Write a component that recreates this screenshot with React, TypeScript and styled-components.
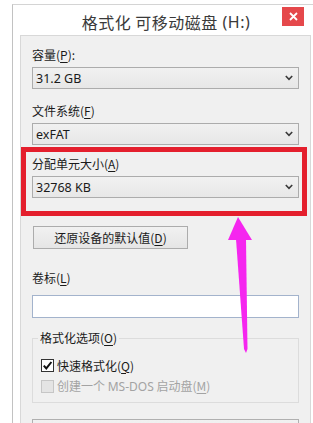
import React from "react";
import styled, { createGlobalStyle } from "styled-components";

const GlobalStyle = createGlobalStyle`
  html, body { margin: 0; padding: 0; background: #ffffff; overflow: hidden; }
  body {
    width: 313px; height: 423px;
    font-family: "Noto Sans", "Noto Sans CJK SC", sans-serif;
    -webkit-font-smoothing: antialiased;
  }
  * { box-sizing: border-box; }
`;

const Page = styled.div`
  position: relative;
  width: 313px;
  height: 423px;
  overflow: hidden;
  padding: 4px 0 0 12px;
`;

const Window = styled.div`
  width: 307px;
  height: 470px;
  border-left: 1px solid #c2c2c2;
  border-top: 1px solid #d4d4d4;
  background: #ffffff;
  display: flex;
  flex-direction: column;
`;

const TitleBar = styled.div`
  position: relative;
  flex: 0 0 30px;
  height: 30px;
  display: flex;
  align-items: center;
  justify-content: center;
  padding-top: 3px;
  font-family: "Noto Sans CJK SC", "Noto Sans", sans-serif;
  font-size: 16px;
  letter-spacing: 0.5px;
  color: #3a3a3a;
`;

const CloseButton = styled.div`
  position: absolute;
  top: 2px;
  right: 15px;
  width: 22px;
  height: 19px;
  background: #e5484b;
  display: flex;
  align-items: center;
  justify-content: center;
`;

const Content = styled.div`
  margin-left: 7px;
  width: 291px;
  flex: 1 0 auto;
  border: 1px solid #d8d8d8;
  background: #f0f0f0;
  padding: 11px 11px 0 11px;
  display: flex;
  flex-direction: column;
  align-items: flex-start;
`;

const Label = styled.div<{ $top?: number; $below?: number }>`
  margin-top: ${(p) => p.$top ?? 0}px;
  margin-bottom: ${(p) => p.$below ?? 4}px;
  font-size: 12px;
  line-height: 16px;
  color: #1a1a1a;
  font-family: "Noto Sans CJK SC", "Noto Sans", sans-serif;
  u { text-decoration-thickness: 1px; text-underline-offset: 2px; }
`;

const Latin = styled.span`
  font-family: "Noto Sans", "Noto Sans CJK SC", sans-serif;
`;

const Select = styled.div`
  flex: 0 0 22px;
  width: 267px;
  height: 22px;
  border: 1px solid #acacac;
  background: linear-gradient(#f1f1f1, #e7e7e7);
  display: flex;
  align-items: center;
  justify-content: space-between;
  padding: 0 5px 0 3px;
  font-family: "Noto Sans", sans-serif;
  font-size: 12.5px;
  color: #1a1a1a;
`;

const Button = styled.div`
  margin-top: 28px;
  margin-left: 1px;
  width: 155px;
  height: 23px;
  border: 1px solid #acacac;
  background: linear-gradient(#f1f1f1, #e5e5e5);
  display: flex;
  align-items: center;
  justify-content: center;
  font-family: "Noto Sans CJK SC", "Noto Sans", sans-serif;
  font-size: 12px;
  color: #1a1a1a;
  u { text-underline-offset: 2px; }
`;

const TextBox = styled.div`
  width: 267px;
  height: 23px;
  border: 1px solid #a3b3cc;
  background: #ffffff;
`;

const GroupBox = styled.fieldset`
  margin: 12px 0 0 0;
  width: 267px;
  border: 1px solid #dcdcdc;
  padding: 11px 8px 8px 8px;
  display: flex;
  flex-direction: column;
  gap: 5px;
`;

const Legend = styled.legend`
  padding: 0 2px;
  margin-left: -3px;
  font-family: "Noto Sans CJK SC", "Noto Sans", sans-serif;
  font-size: 12px;
  line-height: 16px;
  color: #1a1a1a;
  u { text-underline-offset: 2px; }
`;

const CheckRow = styled.div<{ $disabled?: boolean }>`
  display: flex;
  align-items: center;
  gap: 3px;
  height: 16px;
  font-family: "Noto Sans CJK SC", "Noto Sans", sans-serif;
  font-size: 12px;
  color: ${(p) => (p.$disabled ? "#a3a3a3" : "#1a1a1a")};
  u { text-underline-offset: 2px; }
`;

const CheckBox = styled.div<{ $disabled?: boolean }>`
  width: 13px;
  height: 13px;
  border: 1px solid ${(p) => (p.$disabled ? "#c6c6c6" : "#333333")};
  background: ${(p) => (p.$disabled ? "#e4e4e4" : "#ffffff")};
  display: flex;
  align-items: center;
  justify-content: center;
`;

const BottomBox = styled.div`
  margin-top: 16px;
  width: 267px;
  height: 30px;
  border: 1px solid #b0b0b0;
  background: linear-gradient(#f1f1f1, #e7e7e7);
`;

const Highlight = styled.div`
  position: absolute;
  left: 21px;
  top: 147px;
  width: 286px;
  height: 69px;
  border: 5px solid #e41f2d;
  pointer-events: none;
`;

const ArrowLayer = styled.svg`
  position: absolute;
  left: 0;
  top: 0;
  pointer-events: none;
`;

const Chevron = () => (
  <svg width="8" height="6" viewBox="0 0 8 6">
    <polyline points="0.8,1 4,4.4 7.2,1" fill="none" stroke="#3a3a3a" strokeWidth="1.6" />
  </svg>
);

export default function App() {
  return (
    <>
      <GlobalStyle />
      <Page>
        <Window>
          <TitleBar>
            格式化 可移动磁盘 <Latin>&nbsp;(H:)</Latin>
            <CloseButton>
              <svg width="9" height="9" viewBox="0 0 9 9">
                <path d="M1 1 L8 8 M8 1 L1 8" stroke="#ffffff" strokeWidth="1.8" />
              </svg>
            </CloseButton>
          </TitleBar>
          <Content>
            <Label>
              容量(<u>P</u>):
            </Label>
            <Select>
              <span>31.2 GB</span>
              <Chevron />
            </Select>
            <Label $top={14}>
              文件系统(<u>F</u>)
            </Label>
            <Select>
              <span>exFAT</span>
              <Chevron />
            </Select>
            <Label $top={11}>
              分配单元大小(<u>A</u>)
            </Label>
            <Select>
              <span>32768 KB</span>
              <Chevron />
            </Select>
            <Button>
              还原设备的默认值(<u>D</u>)
            </Button>
            <Label $top={21} $below={9}>
              卷标(<u>L</u>)
            </Label>
            <TextBox />
            <GroupBox>
              <Legend>
                格式化选项(<u>O</u>)
              </Legend>
              <CheckRow>
                <CheckBox>
                  <svg width="11" height="11" viewBox="0 0 11 11">
                    <polyline points="1.8,5.6 4.3,8.4 9.4,2" fill="none" stroke="#111" strokeWidth="2" />
                  </svg>
                </CheckBox>
                <span>
                  快速格式化(<u>Q</u>)
                </span>
              </CheckRow>
              <CheckRow $disabled>
                <CheckBox $disabled />
                <span>
                  创建一个 <Latin>MS-DOS</Latin> 启动盘(<u>M</u>)
                </span>
              </CheckRow>
            </GroupBox>
            <BottomBox />
          </Content>
        </Window>
        <Highlight />
        <ArrowLayer width="313" height="423" viewBox="0 0 313 423">
          <polygon points="238,217 252,240 228,240" fill="#f526ef" />
          <polygon points="236,239 246,239 247.5,349 246,353 244,349" fill="#f526ef" />
        </ArrowLayer>
      </Page>
    </>
  );
}
